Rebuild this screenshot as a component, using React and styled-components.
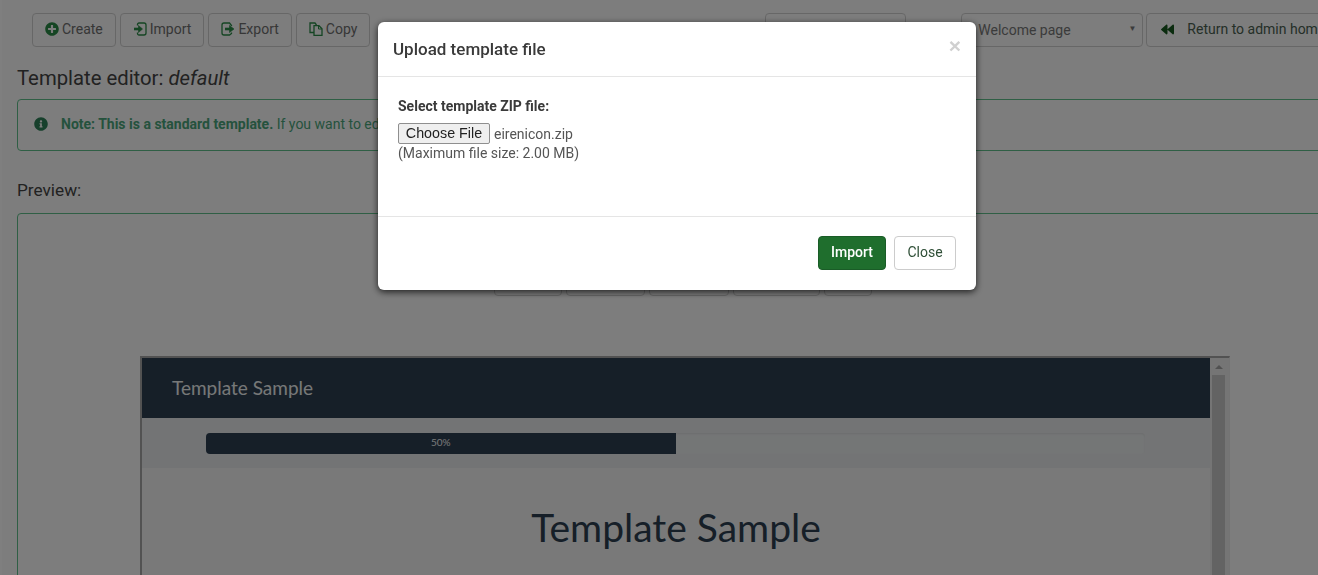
import React from 'react';
import styled, { createGlobalStyle } from 'styled-components';
import { FaPlusCircle, FaInfoCircle, FaBackward } from 'react-icons/fa';

const GlobalStyle = createGlobalStyle`
    html, body {
        margin: 0;
        height: 100%;
        overflow: hidden;
        background: #fff;
    }
    body {
        font-family: Roboto, "Liberation Sans", sans-serif;
        font-size: 14px;
        color: #555;
    }
`;

const ImportIcon = () => (
    <svg width="14" height="14" viewBox="0 0 14 14" fill="none" stroke="#2a8a47" strokeWidth="1.3">
        <path d="M4.500 3.500V2.500a1.500 1.500 0 0 1 1.500-1.500h5a2 2 0 0 1 2 2v8a2 2 0 0 1-2 2H6a1.500 1.500 0 0 1-1.500-1.500v-1" />
        <path d="M1 7h5" strokeWidth="2.600" />
        <path d="M5.500 3.500L9.500 7l-4 3.500z" fill="#2a8a47" strokeWidth="0.600" />
    </svg>
);

const ExportIcon = () => (
    <svg width="14" height="14" viewBox="0 0 14 14" fill="none" stroke="#2a8a47" strokeWidth="1.3">
        <path d="M10.500 4V3.500L8.500 1H3a2 2 0 0 0-2 2v8a2 2 0 0 0 2 2h5.500l2-1.500V10.500" />
        <path d="M4 7h5" strokeWidth="2.600" />
        <path d="M8.500 3.500L13 7l-4.500 3.500z" fill="#2a8a47" strokeWidth="0.600" />
    </svg>
);

const CopyIcon = () => (
    <svg width="14" height="14" viewBox="0 0 14 14" fill="none" stroke="#2a8a47" strokeWidth="1.300">
        <path d="M5 10.500H1V1h5l1.500 2" />
        <path d="M5 3.700h5l3 3v6.600H5z" />
        <path d="M9.500 3.700v3.300H13" strokeWidth="1" />
    </svg>
);

const App = () => {
    return (
        <>
            <GlobalStyle />
            <Page>
                <TopBar>
                    <ButtonGroup>
                        <ToolButton><FaPlusCircle color="#2a8a47" size={14} />Create</ToolButton>
                        <ToolButton><ImportIcon />Import</ToolButton>
                        <ToolButton><ExportIcon />Export</ToolButton>
                        <ToolButton><CopyIcon />Copy</ToolButton>
                    </ButtonGroup>
                    <HiddenButton />
                    <TemplateSelect>
                        Welcome page
                        <Caret>▼</Caret>
                    </TemplateSelect>
                    <ReturnButton><FaBackward color="#17591f" size={13} />Return to admin home</ReturnButton>
                </TopBar>
                <Title>Template editor: <em>default</em></Title>
                <Note>
                    <FaInfoCircle size={14} color="#2f8059" />
                    <NoteText><strong>Note: This is a standard template.</strong> If you want to edit it, please copy it first.</NoteText>
                </Note>
                <PreviewLabel>Preview:</PreviewLabel>
                <PreviewBox>
                    <ScreenButtons>
                        <ScreenButton $width={68} />
                        <ScreenButton $width={79} />
                        <ScreenButton $width={80} />
                        <ScreenButton $width={87} />
                        <ScreenButton $width={48} />
                    </ScreenButtons>
                    <FrameRow>
                        <Frame>
                            <FrameContent>
                                <SampleHeader>Template Sample</SampleHeader>
                                <ProgressStrip>
                                    <ProgressTrack>
                                        <ProgressBar>50%</ProgressBar>
                                    </ProgressTrack>
                                </ProgressStrip>
                                <SampleTitle>Template Sample</SampleTitle>
                            </FrameContent>
                            <Scrollbar>
                                <ScrollArrow />
                                <ScrollThumb />
                            </Scrollbar>
                        </Frame>
                    </FrameRow>
                </PreviewBox>
            </Page>
            <Backdrop />
            <Modal>
                <ModalHeader>
                    <ModalTitle>Upload template file</ModalTitle>
                    <CloseX>×</CloseX>
                </ModalHeader>
                <ModalBody>
                    <FieldLabel>Select template ZIP file:</FieldLabel>
                    <FileRow>
                        <ChooseFile>Choose File</ChooseFile>
                        <FileName>eirenicon.zip</FileName>
                    </FileRow>
                    <Hint>(Maximum file size: 2.00 MB)</Hint>
                </ModalBody>
                <ModalFooter>
                    <PrimaryButton>Import</PrimaryButton>
                    <SecondaryButton>Close</SecondaryButton>
                </ModalFooter>
            </Modal>
        </>
    );
};

export default App;

const Page = styled.div`
    width: 1316px;
    height: 575px;
    margin-left: 2px;
    overflow: hidden;
    padding-left: 15px;
    box-sizing: border-box;
    background: #fafafa;
`;

const TopBar = styled.div`
    display: flex;
    align-items: flex-start;
    padding: 13px 0 0 15px;
    width: 1400px;
`;

const ButtonGroup = styled.div`
    display: flex;
    gap: 4px;
`;

const ToolButton = styled.div`
    display: flex;
    align-items: center;
    gap: 3px;
    height: 34px;
    box-sizing: border-box;
    padding: 0 12px 2px;
    border: 1px solid #cfcfcf;
    border-radius: 4px;
    font-size: 14px;
    color: #6e6e6e;
`;

const HiddenButton = styled(ToolButton)`
    width: 141px;
    margin-left: 395px;
`;

const TemplateSelect = styled.div`
    position: relative;
    width: 182px;
    height: 34px;
    box-sizing: border-box;
    margin-left: 55px;
    padding: 8px 0 0 16px;
    border: 1px solid #cfcfcf;
    border-radius: 4px;
    font-size: 14px;
    color: #777;
`;

const Caret = styled.span`
    position: absolute;
    right: 6px;
    top: 10px;
    font-size: 8px;
    color: #777;
`;

const ReturnButton = styled(ToolButton)`
    gap: 13px;
    margin-left: 3px;
    padding-left: 14px;
    white-space: nowrap;
    color: #4a5f50;
`;

const Title = styled.h1`
    margin: 19px 0 0;
    font-size: 20.300px;
    line-height: 24px;
    font-weight: 400;
    color: #444;
    em {
        font-style: italic;
    }
`;

const Note = styled.div`
    display: flex;
    align-items: center;
    gap: 13px;
    width: 1400px;
    height: 52px;
    box-sizing: border-box;
    margin-top: 9px;
    padding: 0 0 2px 16px;
    border: 1px solid #5fbf8a;
    border-radius: 4px;
`;

const NoteText = styled.span`
    font-size: 14px;
    color: #4aa57b;
    strong {
        font-weight: 700;
    }
`;

const PreviewLabel = styled.h2`
    margin: 29px 0 0;
    font-size: 17.200px;
    line-height: 20px;
    font-weight: 400;
    color: #444;
`;

const PreviewBox = styled.div`
    width: 1400px;
    height: 500px;
    margin-top: 13px;
    box-sizing: border-box;
    border: 1px solid #5fbf8a;
    border-radius: 4px 4px 0 0;
`;

const ScreenButtons = styled.div`
    display: flex;
    gap: 4px;
    padding: 48px 0 0 476px;
`;

const ScreenButton = styled.div`
    width: ${props => props.$width}px;
    height: 34px;
    box-sizing: border-box;
    border: 1px solid #cfcfcf;
    border-radius: 4px;
`;

const FrameRow = styled.div`
    padding: 60px 0 0 122px;
`;

const Frame = styled.div`
    display: flex;
    width: 1090px;
    height: 300px;
    box-sizing: border-box;
    border: 2px solid #a4a4a4;
    border-right: 1px solid #e8e8e8;
    border-bottom: 0;
`;

const FrameContent = styled.div`
    flex: 1;
    min-width: 0;
    background: #f2f2f2;
`;

const SampleHeader = styled.div`
    display: flex;
    align-items: center;
    height: 60px;
    box-sizing: border-box;
    padding: 0 0 2px 30px;
    background: #2c3e50;
    color: #ecf0f1;
    font-family: Lato, sans-serif;
    font-size: 19px;
`;

const ProgressStrip = styled.div`
    height: 50px;
    padding: 15px 65px 0 64px;
    box-sizing: border-box;
    background: #e6e9ea;
`;

const ProgressTrack = styled.div`
    height: 21px;
    background: #e9eced;
    border-radius: 4px;
    box-shadow: inset 0 1px 2px rgba(0, 0, 0, 0.08);
`;

const ProgressBar = styled.div`
    width: 50%;
    height: 21px;
    background: #2c3e50;
    border-radius: 4px 0 0 4px;
    color: #ecf0f1;
    font-family: Lato, sans-serif;
    font-size: 10px;
    line-height: 19px;
    text-align: center;
`;

const SampleTitle = styled.div`
    margin-top: 37px;
    font-family: Lato, sans-serif;
    font-size: 39px;
    line-height: 44px;
    text-align: center;
    color: #2c3e50;
`;

const Scrollbar = styled.div`
    width: 19px;
    flex: none;
    padding: 0 4px 0 2px;
    box-sizing: border-box;
    background: #eaeaea;
`;

const ScrollArrow = styled.div`
    width: 0;
    margin: 7px auto 6px;
    border: 4px solid transparent;
    border-top: 0;
    border-bottom: 4px solid #a2a2a2;
`;

const ScrollThumb = styled.div`
    height: 300px;
    background: #c6c6c6;
`;

const Backdrop = styled.div`
    position: fixed;
    inset: 0;
    background: rgba(0, 0, 0, 0.5);
`;

const Modal = styled.div`
    position: fixed;
    left: 378px;
    top: 22px;
    width: 598px;
    height: 268px;
    box-sizing: border-box;
    display: flex;
    flex-direction: column;
    background: #fff;
    border-radius: 6px;
    box-shadow: 0 2px 7px rgba(0, 0, 0, 0.75);
`;

const ModalHeader = styled.div`
    display: flex;
    justify-content: space-between;
    height: 55px;
    box-sizing: border-box;
    padding: 0 15px;
    border-bottom: 1px solid #e5e5e5;
`;

const ModalTitle = styled.div`
    margin-top: 17px;
    font-size: 17px;
    line-height: 20px;
    font-weight: 500;
    color: #3a3a3a;
`;

const CloseX = styled.div`
    margin: 12px 0 0;
    font-family: "Liberation Sans", sans-serif;
    font-size: 21px;
    font-weight: 700;
    line-height: 24px;
    color: #d0d0d0;
`;

const ModalBody = styled.div`
    flex: 1;
    padding: 20px 20px 0;
`;

const FieldLabel = styled.div`
    font-size: 14px;
    line-height: 18px;
    font-weight: 700;
    color: #3a3a3a;
`;

const FileRow = styled.div`
    display: flex;
    align-items: center;
    gap: 4px;
    margin-top: 8px;
`;

const ChooseFile = styled.div`
    width: 92px;
    height: 21px;
    box-sizing: border-box;
    border: 1px solid #8f8f8f;
    border-radius: 2px;
    background: #efefef;
    font-family: "Liberation Sans", sans-serif;
    font-size: 14.300px;
    line-height: 19px;
    text-align: center;
    color: #222;
`;

const FileName = styled.span`
    font-size: 14px;
    color: #555;
`;

const Hint = styled.div`
    margin-top: -1px;
    font-size: 14px;
    line-height: 20px;
    color: #555;
`;

const ModalFooter = styled.div`
    display: flex;
    justify-content: flex-end;
    gap: 8px;
    height: 74px;
    box-sizing: border-box;
    padding: 19px 20px 0;
    border-top: 1px solid #e5e5e5;
`;

const PrimaryButton = styled.div`
    width: 68px;
    height: 34px;
    box-sizing: border-box;
    border: 1px solid #1a5c27;
    border-radius: 4px;
    background: #1f6e2d;
    color: #fff;
    font-size: 14px;
    font-weight: 500;
    line-height: 30px;
    text-align: center;
`;

const SecondaryButton = styled.div`
    width: 62px;
    height: 34px;
    box-sizing: border-box;
    border: 1px solid #ccc;
    border-radius: 4px;
    color: #2f4f37;
    font-size: 14px;
    line-height: 30px;
    text-align: center;
`;
